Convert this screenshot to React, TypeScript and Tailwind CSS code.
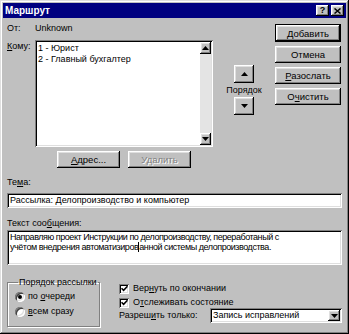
import type { ReactNode } from "react";

const raised =
  "shadow-[inset_-1px_-1px_#000,inset_1px_1px_#fff,inset_-2px_-2px_#808080,inset_2px_2px_#dfdfdf]";
const sunken =
  "shadow-[inset_1px_1px_#808080,inset_-1px_-1px_#fff,inset_2px_2px_#000,inset_-2px_-2px_#dfdfdf]";

function Btn({
  children,
  className = "",
  disabled = false,
}: {
  children: ReactNode;
  className?: string;
  disabled?: boolean;
}) {
  return (
    <div
      className={`flex items-center justify-center bg-[#c0c0c0] ${raised} ${
        disabled ? "text-[#808080] [text-shadow:1px_1px_#fff]" : ""
      } ${className}`}
    >
      {children}
    </div>
  );
}

function Arrow({ down = false }: { down?: boolean }) {
  return (
    <svg width="7" height="4" viewBox="0 0 7 4" className="block">
      {down ? (
        <path d="M0 0h7L3.5 4z" fill="#000" />
      ) : (
        <path d="M0 4h7L3.5 0z" fill="#000" />
      )}
    </svg>
  );
}

function Check() {
  return (
    <span className={`w-[10px] h-[10px] shrink-0 bg-white ${sunken} flex items-center justify-center`}>
      <svg width="7" height="7" viewBox="0 0 7 7">
        <path d="M0.5 3.2 L2.6 5.3 L6.5 1.2" stroke="#000" strokeWidth="1.6" fill="none" />
      </svg>
    </span>
  );
}

function Radio({ on = false }: { on?: boolean }) {
  return (
    <span className="w-[10px] h-[10px] shrink-0 rounded-full bg-white shadow-[inset_1px_1px_#808080,inset_-1px_-1px_#fff,inset_2px_2px_#404040,inset_-2px_-2px_#dfdfdf] flex items-center justify-center">
      {on && <span className="w-[4px] h-[4px] rounded-full bg-black" />}
    </span>
  );
}

export default function App() {
  return (
    <div
      className={`w-[349px] h-[334px] overflow-hidden bg-[#c0c0c0] p-[3px] text-[9px] leading-[11px] text-black font-['Liberation_Sans',Arial,sans-serif] shadow-[inset_-1px_-1px_#000,inset_1px_1px_#dfdfdf,inset_-2px_-2px_#808080,inset_2px_2px_#fff]`}
    >
      {/* title bar */}
      <div className="h-[15px] bg-[#000080] flex items-center pl-[2px] pr-[2px]">
        <span className="font-bold text-white text-[10px]">Маршрут</span>
        <div className="ml-auto flex gap-[2px]">
          <Btn className="w-[13px] h-[11px] font-bold text-[9px]">?</Btn>
          <Btn className="w-[13px] h-[11px]">
            <svg width="7" height="6" viewBox="0 0 7 6">
              <path d="M0.5 0.5 L6.5 5.5 M6.5 0.5 L0.5 5.5" stroke="#000" strokeWidth="1.5" />
            </svg>
          </Btn>
        </div>
      </div>

      <div className="pl-[4px] pr-[4px]">
        <div className="flex">
          <div className="w-[268px]">
            <div className="flex mt-[5px] h-[11px]">
              <span className="w-[28px]">От:</span>
              <span>Unknown</span>
            </div>
            <div className="flex mt-[6px]">
              <span className="w-[28px] pt-[1px]">
                <u>К</u>ому:
              </span>
              <div className={`w-[178px] h-[107px] bg-white ${sunken} flex p-[2px]`}>
                <div className="flex-1 pl-[1px] pt-[1px]">
                  <div>1 - Юрист</div>
                  <div>2 - Главный бухгалтер</div>
                </div>
                <div className="w-[11px] flex flex-col bg-[#e4e4e4]">
                  <Btn className="h-[12px]">
                    <Arrow />
                  </Btn>
                  <div className="flex-1" />
                  <Btn className="h-[12px]">
                    <Arrow down />
                  </Btn>
                </div>
              </div>
              <div className="w-[62px] flex flex-col items-center pt-[25px]">
                <Btn className="w-[20px] h-[18px]">
                  <Arrow />
                </Btn>
                <span className="mt-[2px]">Порядок</span>
                <Btn className="w-[20px] h-[18px] mt-[1px]">
                  <Arrow down />
                </Btn>
              </div>
            </div>
            <div className="flex gap-[8px] ml-[50px] mt-[4px] text-[9.5px]">
              <Btn className="w-[63px] h-[17px]">
                <span>
                  <u>А</u>дрес...
                </span>
              </Btn>
              <Btn className="w-[63px] h-[17px]" disabled>
                Удалить
              </Btn>
            </div>
          </div>

          <div className="w-[66px] flex flex-col gap-[4px] mt-[6px] text-[9.5px]">
            <div className="h-[18px] border border-black">
              <Btn className="h-full">
                <span>
                  <u>Д</u>обавить
                </span>
              </Btn>
            </div>
            <Btn className="h-[17px]">Отмена</Btn>
            <Btn className="h-[17px]">
              <span>
                <u>Р</u>азослать
              </span>
            </Btn>
            <Btn className="h-[17px]">
              <span>
                О<u>ч</u>истить
              </span>
            </Btn>
          </div>
        </div>

        <div className="mt-[9px]">
          Те<u>м</u>а:
        </div>
        <div className={`mt-[5px] h-[15px] bg-white ${sunken} flex items-center px-[3px]`}>
          Рассылка: Делопроизводство и компьютер
        </div>

        <div className="mt-[10px]">
          Текст соо<u>б</u>щения:
        </div>
        <div
          className={`mt-[1px] h-[35px] bg-white ${sunken} px-[3px] pt-[2px] leading-[10px] whitespace-nowrap tracking-[-0.45px]`}
        >
          <div>Направляю проект Инструкции по делопроизводству, переработаный с</div>
          <div>
            учётом внедрения автоматизиров
            <span className="inline-block w-px h-[10px] bg-black align-[-2px]" />
            анной системы делопроизводства.
          </div>
        </div>

        <div className="flex mt-[12px]">
          <fieldset className="w-[93px] h-[50px] border border-[#808080] shadow-[1px_1px_#fff,inset_1px_1px_#fff] pl-[7px] pt-[3px]">
            <legend className="ml-[3px] px-[1px] leading-[11px] whitespace-nowrap">Порядок рассылки</legend>
            <div className="flex items-center gap-[3px] h-[11px]">
              <Radio on />
              <span>
                по <u>о</u>череди
              </span>
            </div>
            <div className="flex items-center gap-[3px] h-[11px] mt-[4px]">
              <Radio />
              <span>
                <u>в</u>сем сразу
              </span>
            </div>
          </fieldset>

          <div className="ml-[19px] flex-1 flex flex-col">
            <div className="flex items-center gap-[4px] h-[11px] mt-[6px]">
              <Check />
              <span>
                Вер<u>н</u>уть по окончании
              </span>
            </div>
            <div className="flex items-center gap-[4px] h-[11px] mt-[3px]">
              <Check />
              <span>
                О<u>т</u>слеживать состояние
              </span>
            </div>
            <div className="flex items-center h-[15px]">
              <span className="w-[91px]">
                Разреш<u>и</u>ть только:
              </span>
              <div className={`w-[132px] h-[15px] bg-white ${sunken} flex items-center pl-[3px] pr-[2px]`}>
                <span className="flex-1">Запись исправлений</span>
                <Btn className="w-[12px] h-[11px]">
                  <Arrow down />
                </Btn>
              </div>
            </div>
          </div>
        </div>
      </div>
    </div>
  );
}
